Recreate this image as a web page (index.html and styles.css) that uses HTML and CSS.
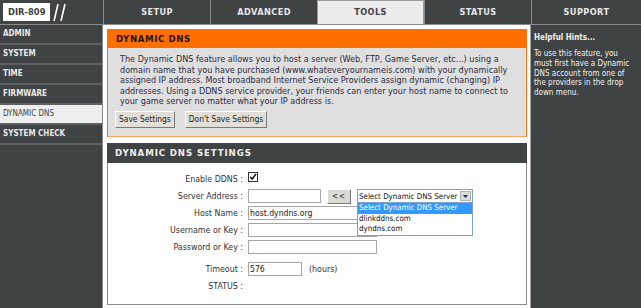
FILE: index.html
```html
<!DOCTYPE html>
<html>
  <head>
    <link rel="stylesheet" href="styles.css">
  </head>
<body>
<!--Top bar with the model logo and the main tabs-->
<div class="topbar">
  <div class="logo">
    <span class="model">DIR-809</span>
    <svg class="slashes" width="16" height="19" viewBox="0 0 16 19">
      <line x1="6" y1="1" x2="2" y2="18" stroke="#fff" stroke-width="1.6"/>
      <line x1="13" y1="1" x2="9" y2="18" stroke="#fff" stroke-width="1.6"/>
    </svg>
  </div>
  <div class="tab">SETUP</div>
  <div class="tab">ADVANCED</div>
  <div class="tab active">TOOLS</div>
  <div class="tab">STATUS</div>
  <div class="tab">SUPPORT</div>
</div>
<div class="page">
  <!--Left menu-->
  <div class="sidebar">
    <div class="item">ADMIN</div>
    <div class="item">SYSTEM</div>
    <div class="item">TIME</div>
    <div class="item">FIRMWARE</div>
    <div class="item current">DYNAMIC DNS</div>
    <div class="item">SYSTEM CHECK</div>
  </div>
  <!--Main content-->
  <div class="main">
    <div class="box intro">
      <div class="box-title">DYNAMIC DNS</div>
      <div class="box-body">
        <p class="desc">The Dynamic DNS feature allows you to host a server (Web, FTP, Game Server, etc...) using a domain name that you have purchased (www.whateveryournameis.com) with your dynamically assigned IP address. Most broadband Internet Service Providers assign dynamic (changing) IP addresses. Using a DDNS service provider, your friends can enter your host name to connect to your game server no matter what your IP address is.</p>
        <div class="buttons">
          <button class="btn">Save Settings</button>
          <button class="btn">Don't Save Settings</button>
        </div>
      </div>
    </div>
    <div class="box settings">
      <div class="box-title">DYNAMIC DNS SETTINGS</div>
      <div class="box-body">
        <div class="row">
          <span class="label">Enable DDNS :</span>
          <span class="check">
            <svg width="10" height="10" viewBox="0 0 10 10"><rect x="0.5" y="0.5" width="9" height="9" fill="#fff" stroke="#333"/><path d="M2.2 4.8 L4.2 7 L8 2" fill="none" stroke="#111" stroke-width="1.5"/></svg>
          </span>
        </div>
        <div class="row">
          <span class="label">Server Address :</span>
          <span class="field">
            <input class="text short" type="text" value="">
            <button class="btn small">&lt;&lt;</button>
            <span class="select">
              <span class="select-text">Select Dynamic DNS Server</span>
              <span class="arrow"><svg width="5" height="3" viewBox="0 0 5 3"><path d="M0 0 H5 L2.5 3 Z" fill="#1a2a6c"/></svg></span>
              <span class="options">
                <span class="option picked">Select Dynamic DNS Server</span>
                <span class="option">dlinkddns.com</span>
                <span class="option">dyndns.com</span>
              </span>
            </span>
          </span>
        </div>
        <div class="row">
          <span class="label">Host Name :</span>
          <span class="field"><input class="text long" type="text" value="host.dyndns.org"></span>
        </div>
        <div class="row">
          <span class="label">Username or Key :</span>
          <span class="field"><input class="text long" type="text" value=""></span>
        </div>
        <div class="row">
          <span class="label">Password or Key :</span>
          <span class="field"><input class="text long" type="text" value=""></span>
        </div>
        <div class="row timeout">
          <span class="label">Timeout :</span>
          <span class="field"><input class="text tiny" type="text" value="576"> <span class="unit">(hours)</span></span>
        </div>
        <div class="row">
          <span class="label">STATUS :</span>
          <span class="field"></span>
        </div>
      </div>
    </div>
  </div>
  <!--Help column-->
  <div class="hints">
    <div class="hints-title">Helpful Hints...</div>
    <p class="hints-text">To use this feature, you must first have a Dynamic DNS account from one of the providers in the drop down menu.</p>
  </div>
</div>
</body>
</html>
```

FILE: styles.css
```css
body{
  margin: 0;
  background-color: #404343;
  font-family: "DejaVu Sans Condensed", "DejaVu Sans", sans-serif;
  font-size: 8.6px;
  color: #333;
  overflow: hidden;
}
.topbar{
  display: grid;
  grid-template-columns: 103px 107px 107px 107px 107px 1fr;
  height: 25px;
  border-bottom: 1px solid #8a8c8c;
  box-sizing: border-box;
}
.logo{
  display: flex;
  align-items: center;
  padding-left: 3px;
  gap: 2px;
}
.model{
  display: block;
  background-color: #fff;
  width: 47px;
  height: 18px;
  line-height: 18px;
  padding-left: 5px;
  box-sizing: border-box;
  font-family: "DejaVu Sans", sans-serif;
  font-weight: bold;
  font-size: 8.4px;
  color: #404343;
}
.tab{
  border-left: 1px solid #8a8c8c;
  text-align: center;
  line-height: 24px;
  font-family: "DejaVu Sans", sans-serif;
  font-weight: bold;
  font-size: 8.2px;
  letter-spacing: 0.4px;
  color: #e6e6e6;
}
.tab.active{
  background-color: #ececec;
  color: #404343;
  border: 1px solid #9a9a9a;
  border-bottom: none;
  line-height: 22px;
}
.page{
  display: grid;
  grid-template-columns: 103px 428px 1fr;
  height: 283px;
}
.sidebar{
  border-right: 1px solid #8a8c8c;
}
.item{
  height: 18px;
  line-height: 18px;
  padding-left: 3px;
  border-bottom: 2px solid #5d6060;
  font-weight: bold;
  font-size: 8px;
  color: #e8e8e8;
}
.item.current{
  background-color: #eeeeee;
  color: #404343;
  font-weight: normal;
}
.main{
  background-color: #fff;
  padding: 4px 3px 0 4px;
  border-right: 1px solid #a0a0a0;
}
.box-title{
  height: 18px;
  line-height: 18px;
  padding-left: 8px;
  font-family: "DejaVu Sans", sans-serif;
  font-weight: bold;
  font-size: 8.6px;
  letter-spacing: 0.6px;
}
.intro{
  border: 1px solid #ff6f00;
  border-bottom-color: #f8a560;
  margin-bottom: 6px;
}
.intro .box-title{
  background-color: #ff6f00;
  color: #2b1300;
}
.intro .box-body{
  background-color: #dfdfdf;
  padding: 6px 10px 8px 7px;
}
.desc{
  margin: 0 0 4px 5px;
  font-family: "DejaVu Sans", sans-serif;
  font-size: 8.1px;
  line-height: 10.5px;
  color: #2c2c40;
}
.buttons{
  display: flex;
  gap: 10px;
}
.btn{
  font-family: inherit;
  font-size: 8.4px;
  color: #222;
  background-color: #e2dfd8;
  border: 1px solid #fff;
  border-right-color: #7a7a7a;
  border-bottom-color: #7a7a7a;
  height: 17px;
  padding: 0 3px;
}
.settings .box-title{
  background-color: #404343;
  color: #eeeeee;
  height: 20px;
  line-height: 20px;
  letter-spacing: 0.9px;
}
.settings .box-body{
  border: 1px solid #8a8c8c;
  border-top: none;
  height: 142px;
  padding-top: 8px;
  box-sizing: border-box;
}
.row{
  display: grid;
  grid-template-columns: 135px 1fr;
  column-gap: 5px;
  height: 17px;
  align-items: center;
  font-size: 8.8px;
}
.row.timeout{
  margin-top: 4px;
  height: 18px;
}
.label{
  text-align: right;
}
.field{
  display: flex;
  align-items: center;
  gap: 6px;
}
.check{
  display: block;
  width: 10px;
  height: 10px;
  margin-top: -4px;
}
.check svg{
  display: block;
}
.text{
  box-sizing: border-box;
  height: 14px;
  border: 1px solid #a5a5a5;
  padding: 0 1px;
  font-family: inherit;
  font-size: 8.6px;
  color: #222;
}
.short{
  width: 73px;
}
.long{
  width: 129px;
}
.tiny{
  width: 54px;
}
.btn.small{
  height: 15px;
  width: 24px;
  padding: 0;
  font-size: 8px;
  letter-spacing: 1px;
  background-color: #dcdad4;
}
.select{
  position: relative;
  display: flex;
  align-items: center;
  box-sizing: border-box;
  width: 116px;
  height: 14px;
  border: 1px solid #7da2ce;
  background-color: #fff;
  padding-left: 1px;
  font-size: 7.9px;
  color: #111;
}
.select-text{
  flex: 1;
  white-space: nowrap;
  overflow: hidden;
}
.arrow{
  display: flex;
  align-items: center;
  justify-content: center;
  width: 11px;
  height: 10px;
  margin-right: 1px;
  background-color: #dcdcdc;
  border: 1px solid #b0b0b0;
  box-sizing: border-box;
}
.options{
  position: absolute;
  left: -1px;
  top: 12px;
  width: 116px;
  box-sizing: border-box;
  border: 1px solid #7da2ce;
  background-color: #fff;
  display: flex;
  flex-direction: column;
}
.option{
  height: 10.6px;
  line-height: 10.6px;
  padding-left: 1px;
  color: #111;
}
.option.picked{
  background-color: #3399ff;
  color: #fff;
}
.unit{
  margin-left: 1px;
}
.hints{
  padding: 8px 4px 0 3px;
  color: #f0f0f0;
}
.hints-title{
  font-weight: bold;
  font-size: 8px;
  margin-bottom: 7px;
}
.hints-text{
  margin: 0;
  font-size: 8px;
  line-height: 9.8px;
}
```
